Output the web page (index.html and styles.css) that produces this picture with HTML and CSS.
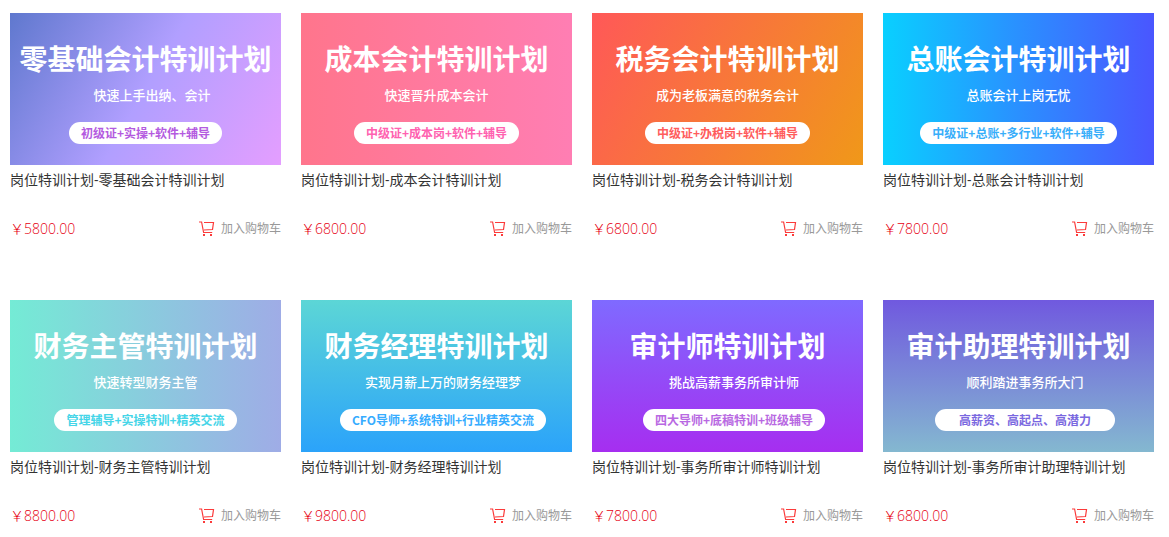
FILE: index.html
```html
<!DOCTYPE html>
<html lang="zh-CN">
<head>
  <meta charset="UTF-8">
  <meta name="viewport" content="width=device-width, initial-scale=1.0">
  <title>岗位特训计划</title>
  <link rel="stylesheet" href="styles.css">
</head>
<body>
  <svg class="sprite" width="0" height="0" aria-hidden="true">
    <symbol id="cart" viewBox="0 0 16 16">
      <path d="M0 1h2.6l2 10.5h8.6M5 1.5h9.5l-1 7L5 9" fill="none" stroke="#fb3a3a" stroke-width="1.2"/>
      <rect x="4" y="13" width="2" height="2" fill="#fb3a3a"/>
      <rect x="11" y="13" width="2" height="2" fill="#fb3a3a"/>
    </symbol>
  </svg>

  <main class="course-list">
    <article class="course">
      <div class="banner banner-violet">
        <h2 class="banner-title">零基础会计特训计划</h2>
        <p class="banner-sub shifted">快速上手出纳、会计</p>
        <p class="banner-tag">初级证+实操+软件+辅导</p>
      </div>
      <a class="course-name" href="#">岗位特训计划-零基础会计特训计划</a>
      <div class="course-foot">
        <span class="price">￥5800.00</span>
        <button class="add-cart" type="button"><svg class="cart-icon"><use href="#cart"/></svg>加入购物车</button>
      </div>
    </article>

    <article class="course">
      <div class="banner banner-pink">
        <h2 class="banner-title">成本会计特训计划</h2>
        <p class="banner-sub">快速晋升成本会计</p>
        <p class="banner-tag">中级证+成本岗+软件+辅导</p>
      </div>
      <a class="course-name" href="#">岗位特训计划-成本会计特训计划</a>
      <div class="course-foot">
        <span class="price">￥6800.00</span>
        <button class="add-cart" type="button"><svg class="cart-icon"><use href="#cart"/></svg>加入购物车</button>
      </div>
    </article>

    <article class="course">
      <div class="banner banner-orange">
        <h2 class="banner-title">税务会计特训计划</h2>
        <p class="banner-sub">成为老板满意的税务会计</p>
        <p class="banner-tag">中级证+办税岗+软件+辅导</p>
      </div>
      <a class="course-name" href="#">岗位特训计划-税务会计特训计划</a>
      <div class="course-foot">
        <span class="price">￥6800.00</span>
        <button class="add-cart" type="button"><svg class="cart-icon"><use href="#cart"/></svg>加入购物车</button>
      </div>
    </article>

    <article class="course">
      <div class="banner banner-blue">
        <h2 class="banner-title">总账会计特训计划</h2>
        <p class="banner-sub">总账会计上岗无忧</p>
        <p class="banner-tag">中级证+总账+多行业+软件+辅导</p>
      </div>
      <a class="course-name" href="#">岗位特训计划-总账会计特训计划</a>
      <div class="course-foot">
        <span class="price">￥7800.00</span>
        <button class="add-cart" type="button"><svg class="cart-icon"><use href="#cart"/></svg>加入购物车</button>
      </div>
    </article>

    <article class="course">
      <div class="banner banner-mint">
        <h2 class="banner-title">财务主管特训计划</h2>
        <p class="banner-sub">快速转型财务主管</p>
        <p class="banner-tag">管理辅导+实操特训+精英交流</p>
      </div>
      <a class="course-name" href="#">岗位特训计划-财务主管特训计划</a>
      <div class="course-foot">
        <span class="price">￥8800.00</span>
        <button class="add-cart" type="button"><svg class="cart-icon"><use href="#cart"/></svg>加入购物车</button>
      </div>
    </article>

    <article class="course">
      <div class="banner banner-sky">
        <h2 class="banner-title">财务经理特训计划</h2>
        <p class="banner-sub shifted">实现月薪上万的财务经理梦</p>
        <p class="banner-tag shifted">CFO导师+系统特训+行业精英交流</p>
      </div>
      <a class="course-name" href="#">岗位特训计划-财务经理特训计划</a>
      <div class="course-foot">
        <span class="price">￥9800.00</span>
        <button class="add-cart" type="button"><svg class="cart-icon"><use href="#cart"/></svg>加入购物车</button>
      </div>
    </article>

    <article class="course">
      <div class="banner banner-purple">
        <h2 class="banner-title">审计师特训计划</h2>
        <p class="banner-sub shifted">挑战高薪事务所审计师</p>
        <p class="banner-tag shifted">四大导师+底稿特训+班级辅导</p>
      </div>
      <a class="course-name" href="#">岗位特训计划-事务所审计师特训计划</a>
      <div class="course-foot">
        <span class="price">￥7800.00</span>
        <button class="add-cart" type="button"><svg class="cart-icon"><use href="#cart"/></svg>加入购物车</button>
      </div>
    </article>

    <article class="course">
      <div class="banner banner-indigo">
        <h2 class="banner-title">审计助理特训计划</h2>
        <p class="banner-sub shifted">顺利踏进事务所大门</p>
        <p class="banner-tag banner-tag-wide shifted">高薪资、高起点、高潜力</p>
      </div>
      <a class="course-name" href="#">岗位特训计划-事务所审计助理特训计划</a>
      <div class="course-foot">
        <span class="price">￥6800.00</span>
        <button class="add-cart" type="button"><svg class="cart-icon"><use href="#cart"/></svg>加入购物车</button>
      </div>
    </article>
  </main>
</body>
</html>
```
FILE: styles.css
```css
* {
  box-sizing: border-box;
  margin: 0;
  padding: 0;
}
body {
  font-family: "Open Sans", "Noto Sans CJK SC", sans-serif;
  background-color: #fff;
  color: #333;
}
.sprite {
  position: absolute;
}
.course-list {
  display: grid;
  grid-template-columns: repeat(4, 1fr);
  gap: 57px 20px;
  padding: 13px 15px 0 10px;
}
.course {
  min-width: 0;
}

/* banner */
.banner {
  display: flex;
  flex-direction: column;
  align-items: center;
  aspect-ratio: 271 / 152;
  padding-top: 27px;
  color: #fff;
  font-family: "Noto Sans CJK SC", sans-serif;
  white-space: nowrap;
  overflow: hidden;
}
.banner-title {
  font-size: 28px;
  line-height: 36px;
  font-weight: 700;
}
.banner-sub {
  margin-top: 10px;
  font-size: 13px;
  line-height: 18px;
  font-weight: 500;
}
.banner-tag {
  margin-top: 18px;
  padding: 0 12px;
  border-radius: 11px;
  background-color: #fff;
  font-size: 12px;
  line-height: 22px;
  font-weight: 700;
}
.banner-tag-wide {
  padding: 0 24px;
}
.shifted {
  margin-left: 13px;
}
.banner-violet {
  background: linear-gradient(120deg, #5f78ce, #b19fff 50%, #e49eff);
}
.banner-violet .banner-tag {
  color: #b45be0;
}
.banner-pink {
  background: linear-gradient(90deg, #ff758c, #ff7eb3);
}
.banner-pink .banner-tag {
  color: #ff62b0;
}
.banner-orange {
  background: linear-gradient(120deg, #ff5858, #f09819);
}
.banner-orange .banner-tag {
  color: #ff5c5c;
}
.banner-blue {
  background: linear-gradient(90deg, #09d0ff, #2a90ff 50%, #4a56ff);
}
.banner-blue .banner-tag {
  color: #38aefa;
}
.banner-mint {
  background: linear-gradient(90deg, #74ebd5, #9face6);
}
.banner-mint .banner-tag {
  color: #45d5e8;
}
.banner-sky {
  background: linear-gradient(180deg, #5cd6d6, #2ba3fa);
}
.banner-sky .banner-tag {
  color: #36acff;
}
.banner-purple {
  background: linear-gradient(180deg, #7f6aff, #a62ef0);
}
.banner-purple .banner-tag {
  color: #b868e2;
}
.banner-indigo {
  background: linear-gradient(180deg, #7059df, #84b8d0);
}
.banner-indigo .banner-tag {
  color: #7a68e0;
}

/* name, price and cart */
.course-name {
  display: block;
  font-size: 14px;
  line-height: 30px;
  color: #333;
  text-decoration: none;
  white-space: nowrap;
  overflow: hidden;
  text-overflow: ellipsis;
}
.course-foot {
  display: flex;
  justify-content: space-between;
  align-items: center;
  margin-top: 20px;
}
.price {
  font-size: 14px;
  line-height: 28px;
  font-weight: 300;
  color: #e60012;
}
.add-cart {
  display: flex;
  align-items: center;
  gap: 6px;
  border: none;
  background: none;
  font-family: inherit;
  font-size: 12px;
  line-height: 28px;
  color: #999;
  cursor: pointer;
}
.cart-icon {
  width: 16px;
  height: 16px;
}
```
